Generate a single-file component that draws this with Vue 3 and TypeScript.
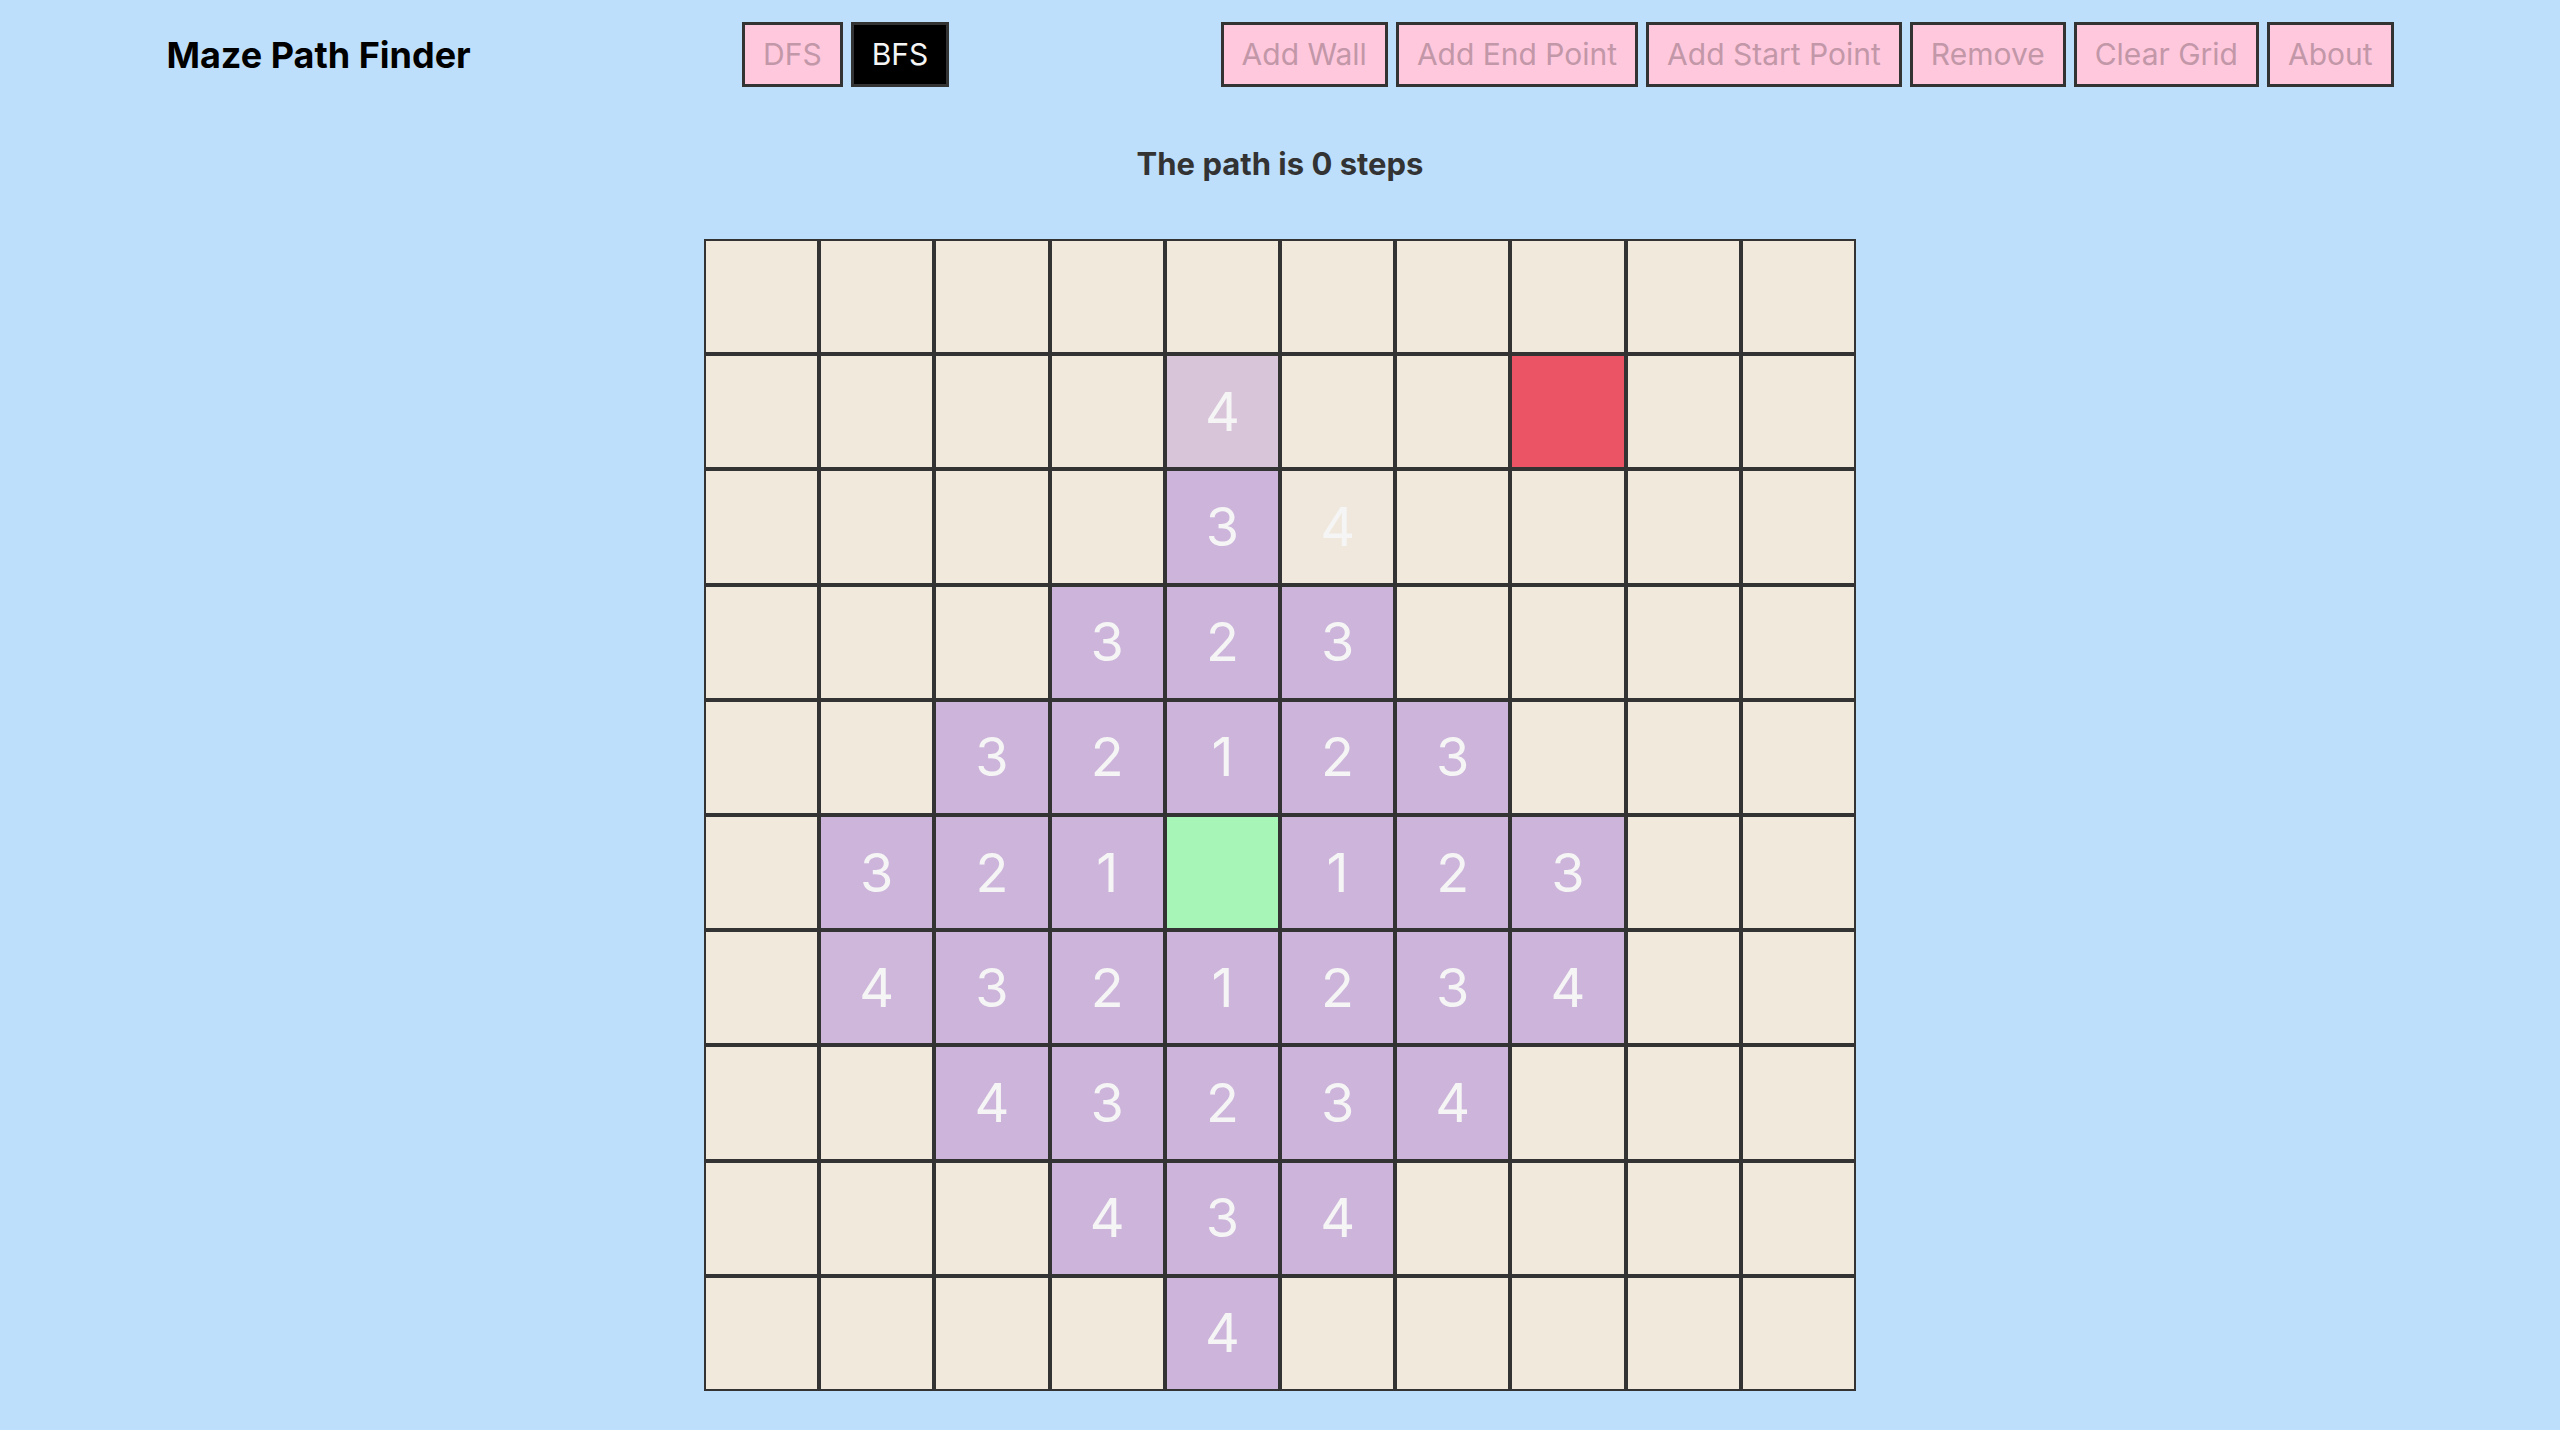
<script setup lang="ts">
import { computed, ref } from 'vue'

type Algorithm = 'DFS' | 'BFS'

interface Cell {
  kind: 'empty' | 'visited' | 'settling' | 'fading' | 'entering' | 'start' | 'end'
  distance: string
}

const algorithms: Algorithm[] = ['DFS', 'BFS']
const active = ref<Algorithm>('BFS')
const steps = ref(0)
const running = ref(true)

const actions = ['Add Wall', 'Add End Point', 'Add Start Point', 'Remove', 'Clear Grid', 'About']

// S: start, E: end, digits: distance from the start.
// a, b, c: cells at distance 4 whose colour is still fading in,
// from almost transparent (a) to almost solid (c).
const layout = [
  '..........',
  '....b..E..',
  '....3a....',
  '...323....',
  '..32123...',
  '.321S123..',
  '.c321234..',
  '..43234...',
  '...434....',
  '....4.....',
]

const toCell = (mark: string): Cell => {
  switch (mark) {
    case '.': return { kind: 'empty', distance: '' }
    case 'S': return { kind: 'start', distance: '' }
    case 'E': return { kind: 'end', distance: '' }
    case 'a': return { kind: 'entering', distance: '4' }
    case 'b': return { kind: 'fading', distance: '4' }
    case 'c': return { kind: 'settling', distance: '4' }
    default: return { kind: 'visited', distance: mark }
  }
}

const cells = computed<Cell[]>(() => layout.flatMap((row) => [...row].map(toCell)))
</script>

<template>
  <div class="page">
    <header class="bar">
      <h1 class="title">Maze Path Finder</h1>
      <div class="group">
        <button
          v-for="name in algorithms"
          :key="name"
          type="button"
          class="btn"
          :class="{ active: name === active }"
          :disabled="running"
        >{{ name }}</button>
      </div>
      <nav class="group">
        <button
          v-for="action in actions"
          :key="action"
          type="button"
          class="btn"
          :disabled="running"
        >{{ action }}</button>
      </nav>
    </header>
    <main class="main">
      <p class="status">The path is {{ steps }} steps</p>
      <div class="grid">
        <div v-for="(cell, i) in cells" :key="i" class="cell" :class="cell.kind">{{ cell.distance }}</div>
      </div>
    </main>
  </div>
</template>

<style>
body {
  background: #bddffc;
}
</style>

<style scoped>
.page {
  font-family: Inter, "Liberation Sans", sans-serif;
  color: #333;
}

.bar {
  display: flex;
  align-items: center;
  justify-content: space-between;
  padding: 22px 6.5vw;
}

.title {
  margin: 0;
  color: #000;
  font-size: 36px;
  font-weight: 700;
  line-height: 44px;
}

.group {
  display: flex;
  gap: 8px;
}

.btn {
  padding: 10px 18px;
  border: 3px solid #333;
  border-radius: 0;
  background: #ffc8dd;
  color: #c297a8;
  font-family: inherit;
  font-size: 30px;
  line-height: 39px;
  white-space: nowrap;
}

.btn.active {
  background: #000;
  color: #f5f5f5;
}

.main {
  display: flex;
  flex-direction: column;
  align-items: center;
  padding: 35px 0 39px;
}

.status {
  margin: 0 0 55px;
  font-size: 31px;
  font-weight: 700;
  line-height: 40px;
}

.grid {
  display: grid;
  grid-template-columns: repeat(10, minmax(0, 1fr));
  grid-template-rows: repeat(10, minmax(0, 1fr));
  width: 45vw;
  aspect-ratio: 1;
}

.cell {
  display: flex;
  align-items: center;
  justify-content: center;
  border: 2px solid #333;
  background: #f1e9dc;
  color: #f5f5f5;
  font-size: 54px;
  line-height: 64px;
}

.visited {
  background: #cdb4db;
}

.settling {
  background: #cfb7db;
}

.fading {
  background: #d9c5da;
}

.entering {
  background: #f0e8dd;
}

.start {
  background: #a7f6b7;
}

.end {
  background: #eb5464;
}
</style>
